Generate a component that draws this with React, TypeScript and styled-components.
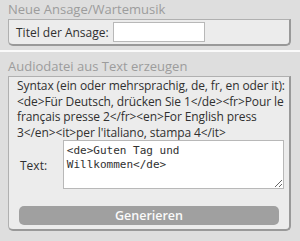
import React from "react";
import { styled, createGlobalStyle } from "styled-components";

const GlobalStyle = createGlobalStyle`
  html, body {
    margin: 0;
    padding: 0;
    background: #dedede;
    font-family: "Open Sans", "DejaVu Sans", sans-serif;
  }
  * { box-sizing: border-box; }
`;

const Page = styled.div`
  width: 300px;
  height: 241px;
  display: flex;
  flex-direction: column;
  background: #dedede;
  overflow: hidden;
`;

const Section = styled.section`
  padding: 1px 9px 0 8px;
`;

const Separator = styled.div`
  height: 2px;
  background: #fafafa;
  margin: 4px 0 5px;
`;

const Legend = styled.div`
  font-size: 13px;
  line-height: 17px;
  color: #9c9c9c;
  margin-bottom: 1px;
`;

const Box = styled.div`
  background: #ececec;
  border: 1px solid #b0b0b0;
  border-right: 2px solid #999;
  border-bottom: 2px solid #999;
  border-radius: 0 0 5px 5px;
  color: #303030;
  font-size: 12px;
`;

const Row = styled.div`
  display: flex;
  align-items: center;
  gap: 4px;
  padding: 2px 7px 2px 7px;
`;

const TitleInput = styled.input`
  width: 92px;
  height: 20px;
  border: 1px solid #b8b8b8;
  background: #fff;
  padding: 0 1px;
`;

const Syntax = styled.p`
  margin: 0;
  padding: 1px 4px 0 8px;
  line-height: 15.5px;
  letter-spacing: -0.1px;
`;

const TextRow = styled.div`
  display: flex;
  align-items: flex-start;
  padding: 0 5px 0 11px;
`;

const TextLabel = styled.label`
  width: 43px;
  padding-top: 17px;
`;

const TextArea = styled.textarea`
  width: 222px;
  height: 49px;
  border: 1px solid #b8b8b8;
  background: #fff;
  font-family: "DejaVu Sans Mono", monospace;
  font-size: 11px;
  line-height: 14px;
  color: #303030;
  padding: 3px 3px;
  resize: both;
  overflow: hidden;
  outline: none;
`;

const Button = styled.button`
  display: block;
  margin: 17px 10px 4px 10px;
  width: calc(100% - 20px);
  height: 19px;
  border: none;
  border-radius: 5px;
  background: #a0a0a0;
  color: #fafafa;
  font-family: "Open Sans", sans-serif;
  font-size: 12.5px;
  font-weight: 600;
  padding: 0;
`;

export default function App() {
  return (
    <Page>
      <GlobalStyle />
      <Section>
        <Legend>Neue Ansage/Wartemusik</Legend>
        <Box>
          <Row>
            <span>Titel der Ansage:</span>
            <TitleInput />
          </Row>
        </Box>
      </Section>
      <Separator />
      <Section>
        <Legend>Audiodatei aus Text erzeugen</Legend>
        <Box>
          <Syntax>
            Syntax (ein oder mehrsprachig, de, fr, en oder it):
            &lt;de&gt;Für Deutsch, drücken Sie 1&lt;/de&gt;&lt;fr&gt;Pour le
            français presse 2&lt;/fr&gt;&lt;en&gt;For English press
            3&lt;/en&gt;&lt;it&gt;per l'italiano, stampa 4&lt;/it&gt;
          </Syntax>
          <TextRow>
            <TextLabel>Text:</TextLabel>
            <TextArea defaultValue="<de>Guten Tag und Willkommen</de>" />
          </TextRow>
          <Button>Generieren</Button>
        </Box>
      </Section>
    </Page>
  );
}
